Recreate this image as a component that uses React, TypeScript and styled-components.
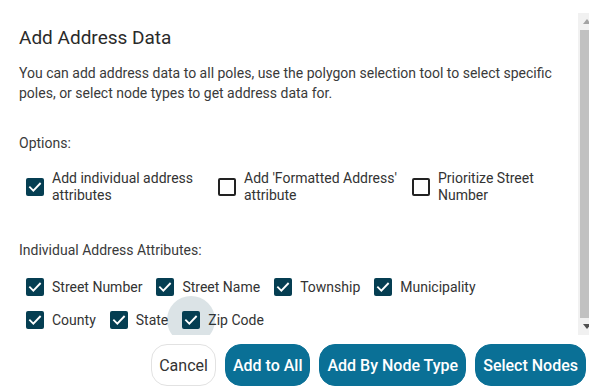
import styled, { createGlobalStyle } from "styled-components";

const GlobalStyle = createGlobalStyle`
  html, body {
    margin: 0;
    padding: 0;
    background: #fff;
  }
  body {
    font-family: Roboto, "Liberation Sans", Arial, sans-serif;
    color: #333;
  }
`;

const Dialog = styled.div`
  width: 589px;
  height: 392px;
  padding-top: 13px;
  box-sizing: border-box;
  display: flex;
  flex-direction: column;
  background: #fff;
`;

const ScrollArea = styled.div`
  height: 322px;
  display: flex;
  overflow: hidden;
`;

const Body = styled.div`
  flex: 1;
  padding: 13px 19px 0 19px;
  position: relative;
  overflow: hidden;
`;

const Title = styled.h2`
  margin: 0;
  font-size: 19px;
  line-height: 24px;
  font-weight: 400;
  color: #2a2a2a;
`;

const Description = styled.p`
  margin: 13px 0 0;
  font-size: 14px;
  line-height: 20px;
  color: #3a3a3a;
`;

const SectionLabel = styled.div<{ $gap: number }>`
  margin-top: ${({ $gap }) => $gap}px;
  font-size: 14px;
  line-height: 20px;
  color: #3a3a3a;
`;

const OptionGrid = styled.div`
  margin-top: 17px;
  padding-left: 7px;
  display: grid;
  grid-template-columns: 192px 194px 1fr;
`;

const OptionItem = styled.label`
  display: flex;
  align-items: center;
  gap: 8px;
  font-size: 14px;
  line-height: 17px;
  color: #333;
  padding-right: 8px;
`;

const AttrList = styled.div`
  margin-top: 18px;
  padding-left: 7px;
  max-width: 520px;
  display: flex;
  flex-wrap: wrap;
  column-gap: 14px;
  row-gap: 15px;
`;

const AttrItem = styled.label`
  position: relative;
  display: flex;
  align-items: center;
  gap: 8px;
  font-size: 14px;
  line-height: 18px;
  color: #333;
`;

const BoxWrap = styled.span`
  position: relative;
  display: inline-flex;
  flex-shrink: 0;
`;

const Ripple = styled.span`
  position: absolute;
  left: 50%;
  top: 50%;
  width: 48px;
  height: 48px;
  margin: -24px 0 0 -24px;
  border-radius: 50%;
  background: rgba(13, 69, 90, 0.15);
  pointer-events: none;
`;

const Box = styled.span<{ $checked: boolean }>`
  position: relative;
  width: 18px;
  height: 18px;
  box-sizing: border-box;
  border-radius: 2px;
  display: inline-flex;
  align-items: center;
  justify-content: center;
  background: ${({ $checked }) => ($checked ? "#053e52" : "#fff")};
  border: ${({ $checked }) => ($checked ? "none" : "2px solid #222")};
`;

const Scrollbar = styled.div`
  width: 11px;
  background: #f1f1f1;
  display: flex;
  flex-direction: column;
  align-items: flex-start;
`;

const Arrow = styled.div`
  height: 17px;
  width: 17px;
  display: flex;
  align-items: center;
  justify-content: center;
  flex-shrink: 0;
`;

const Thumb = styled.div`
  flex: 1;
  width: 9px;
  margin-left: 2px;
  background: #c1c1c1;
`;

const Actions = styled.div`
  display: flex;
  justify-content: flex-end;
  gap: 9px;
  padding: 9px 3px 0 0;
`;

const Button = styled.button<{ $primary?: boolean }>`
  height: 42px;
  padding: 0 7px;
  border-radius: 16px;
  font-family: Roboto, "Liberation Sans", Arial, sans-serif;
  font-size: 16px;
  font-weight: ${({ $primary }) => ($primary ? 500 : 400)};
  color: ${({ $primary }) => ($primary ? "#fff" : "#333")};
  background: ${({ $primary }) => ($primary ? "#0a7096" : "#fff")};
  border: 1px solid ${({ $primary }) => ($primary ? "#0a7096" : "#e2e2e2")};
  cursor: pointer;
`;

function Check({ checked, ripple }: { checked: boolean; ripple?: boolean }) {
  return (
    <BoxWrap>
      {ripple && <Ripple />}
      <Box $checked={checked}>
        {checked && (
          <svg width="16" height="16" viewBox="0 0 24 24">
            <path
              d="M4.5 12.5l5 5L19.5 7"
              fill="none"
              stroke="#fff"
              strokeWidth="2.8"
              strokeLinecap="square"
            />
          </svg>
        )}
      </Box>
    </BoxWrap>
  );
}

const OPTIONS = [
  { label: "Add individual address attributes", checked: true },
  { label: "Add 'Formatted Address' attribute", checked: false },
  { label: "Prioritize Street Number", checked: false },
];

const ATTRS = [
  "Street Number",
  "Street Name",
  "Township",
  "Municipality",
  "County",
  "State",
  "Zip Code",
];

export default function App() {
  return (
    <>
      <GlobalStyle />
      <Dialog>
        <ScrollArea>
          <Body>
            <Title>Add Address Data</Title>
            <Description>
              You can add address data to all poles, use the polygon selection tool to
              select specific poles, or select node types to get address data for.
            </Description>

            <SectionLabel $gap={30}>Options:</SectionLabel>
            <OptionGrid>
              {OPTIONS.map((o) => (
                <OptionItem key={o.label}>
                  <Check checked={o.checked} />
                  <span>{o.label}</span>
                </OptionItem>
              ))}
            </OptionGrid>

            <SectionLabel $gap={36}>Individual Address Attributes:</SectionLabel>
            <AttrList>
              {ATTRS.map((a) => (
                <AttrItem key={a}>
                  <Check checked ripple={a === "Zip Code"} />
                  <span>{a}</span>
                </AttrItem>
              ))}
            </AttrList>
          </Body>
          <Scrollbar>
            <Arrow>
              <svg width="8" height="5" viewBox="0 0 8 5">
                <path d="M0 5L4 0L8 5Z" fill="#a3a3a3" />
              </svg>
            </Arrow>
            <Thumb />
            <Arrow>
              <svg width="8" height="5" viewBox="0 0 8 5">
                <path d="M0 0L4 5L8 0Z" fill="#505050" />
              </svg>
            </Arrow>
          </Scrollbar>
        </ScrollArea>
        <Actions>
          <Button>Cancel</Button>
          <Button $primary>Add to All</Button>
          <Button $primary>Add By Node Type</Button>
          <Button $primary>Select Nodes</Button>
        </Actions>
      </Dialog>
    </>
  );
}
